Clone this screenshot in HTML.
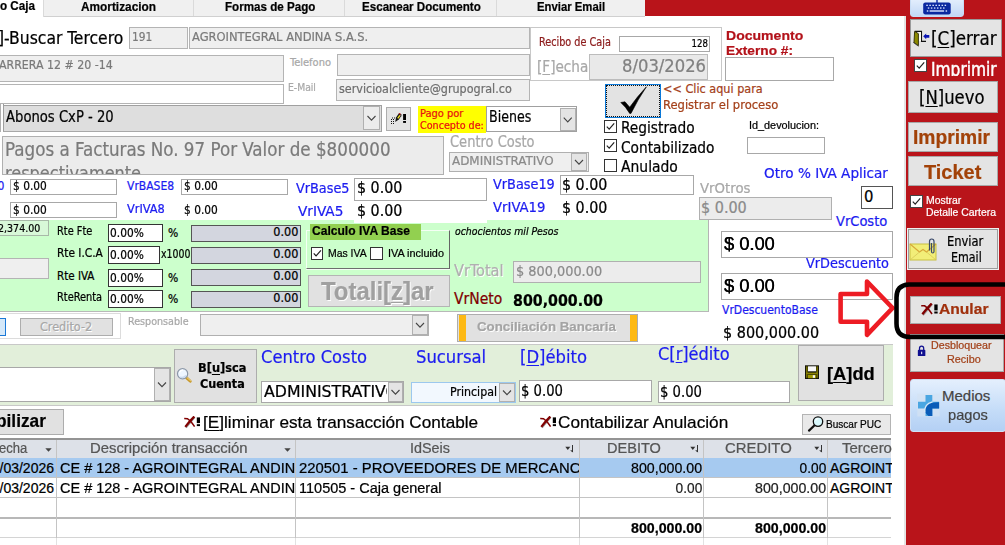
<!DOCTYPE html>
<html lang="es"><head><meta charset="utf-8"><title>Recibo de Caja</title>
<style>html,body{margin:0;padding:0;}body{width:1005px;height:545px;overflow:hidden;position:relative;background:#fff;font-family:"Liberation Sans",sans-serif;}#r{position:absolute;left:0;top:0;width:1005px;height:545px;overflow:hidden;}#r div,#r svg,#r span{position:absolute;}#r div div,#r div span{position:absolute;}.t{white-space:nowrap;line-height:1;transform-origin:0 0;-webkit-text-stroke:0.22px currentColor;}u{text-decoration:underline;text-decoration-thickness:1px;text-underline-offset:1.500px;}</style></head>
<body><div id="r">
<div style="left:0px;top:0px;width:1005px;height:545px;background:#fff;"></div>
<div style="left:645px;top:0px;width:360px;height:16px;background:#b9141a;"></div>
<div style="left:906px;top:0px;width:99px;height:545px;background:#b9141a;"></div>
<div style="left:904px;top:16px;width:2px;height:529px;background:#e4e4e4;"></div>
<div style="left:0px;top:0px;width:645px;height:16.5px;background:#f0f0f0;border-bottom:1px solid #d0d0d0;box-sizing:border-box;"></div>
<div style="left:0px;top:0px;width:44px;height:17px;background:#fff;border-right:1px solid #dadada;box-sizing:border-box;"></div>
<div style="left:193px;top:0px;width:1px;height:16px;background:#dadada;"></div>
<div style="left:344px;top:0px;width:1px;height:16px;background:#dadada;"></div>
<div style="left:496px;top:0px;width:1px;height:16px;background:#dadada;"></div>
<span id="t1" class="t" style="top:0.24px;font-size:12px;color:#000;left:0px;transform:scale(0.9722,1.0);font-weight:bold;">o Caja</span>
<span id="t2" class="t" style="top:0.94px;font-size:12px;color:#000;left:81px;transform:scale(0.9868,1.0);font-weight:bold;">Amortizacion</span>
<span id="t3" class="t" style="top:0.94px;font-size:12px;color:#000;left:225px;transform:scale(0.9677,1.0);font-weight:bold;">Formas de Pago</span>
<span id="t4" class="t" style="top:0.94px;font-size:12px;color:#000;left:362px;transform:scale(0.9675,1.0);font-weight:bold;">Escanear Documento</span>
<span id="t5" class="t" style="top:0.94px;font-size:12px;color:#000;left:537px;transform:scale(0.9444,1.0);font-weight:bold;">Enviar Email</span>
<span id="t6" class="t" style="top:30.45px;font-size:17.5px;color:#000;left:-2.3px;transform:scale(0.9905,1.0);font-family:'DejaVu Sans Condensed','Liberation Sans',sans-serif;">]-Buscar Tercero</span>
<div style="left:129px;top:27px;width:58.5px;height:21.5px;background:#efefef;border:1px solid #b4b4b4;box-sizing:border-box;"></div>
<span id="t7" class="t" style="top:29.98px;font-size:13px;color:#7a7a7a;left:132px;transform:scale(0.9091,1.0);font-family:'DejaVu Sans Condensed','Liberation Sans',sans-serif;">191</span>
<div style="left:189px;top:27px;width:341px;height:21.5px;background:#efefef;border:1px solid #b4b4b4;box-sizing:border-box;"></div>
<span id="t8" class="t" style="top:29.98px;font-size:13px;color:#7a7a7a;left:192px;transform:scale(0.9832,1.0);font-family:'DejaVu Sans Condensed','Liberation Sans',sans-serif;">AGROINTEGRAL ANDINA S.A.S.</span>
<div style="left:530px;top:27px;width:191.5px;height:54px;border:1px solid #c8c8c8;box-sizing:border-box;"></div>
<span id="t9" class="t" style="top:37.25px;font-size:11.5px;color:#8c1a1a;left:539px;transform:scale(0.9351,1.0);font-family:'DejaVu Sans Condensed','Liberation Sans',sans-serif;">Recibo de Caja</span>
<div style="left:619px;top:35.5px;width:91px;height:16.5px;background:#fff;border:1px solid #a8a8a8;box-sizing:border-box;"></div>
<span id="t10" class="t" style="top:38.01px;font-size:11px;color:#000;right:297.5px;transform-origin:100% 0;transform:scale(0.8684,1.0);font-family:'DejaVu Sans Condensed','Liberation Sans',sans-serif;">128</span>
<span id="t11" class="t" style="top:58.53px;font-size:16px;color:#a8a8a8;left:537px;transform:scale(0.9444,1.0);font-family:'DejaVu Sans Condensed','Liberation Sans',sans-serif;">[<u>F</u>]echa</span>
<div style="left:589px;top:53.5px;width:119px;height:26.5px;background:#e9e9e9;border:1px solid #bcbcbc;box-sizing:border-box;"></div>
<span id="t12" class="t" style="top:57.39px;font-size:18px;color:#808080;right:298.70000000000005px;transform-origin:100% 0;transform:scale(1.0120,1.0);font-family:'DejaVu Sans Condensed','Liberation Sans',sans-serif;">8/03/2026</span>
<span id="t13" class="t" style="top:29.53px;font-size:13.5px;color:#b3121a;left:726px;transform:scale(1.0405,0.95);font-weight:bold;">Documento</span>
<span id="t14" class="t" style="top:45.33px;font-size:13.5px;color:#b3121a;left:726px;transform:scale(1.0152,0.95);font-weight:bold;">Externo #:</span>
<div style="left:725px;top:57px;width:109px;height:24px;background:#fff;border:1px solid #a8a8a8;box-sizing:border-box;"></div>
<div style="left:-5px;top:55px;width:288.8px;height:27px;background:#efefef;border:1px solid #b4b4b4;box-sizing:border-box;"></div>
<span id="t15" class="t" style="top:58.48px;font-size:13px;color:#7a7a7a;left:-1px;transform:scale(0.9421,1.0);font-family:'DejaVu Sans Condensed','Liberation Sans',sans-serif;">ARRERA 12 # 20 -14</span>
<div style="left:-5px;top:84px;width:288.8px;height:20px;background:#fff;border:1px solid #b4b4b4;box-sizing:border-box;"></div>
<span id="t16" class="t" style="top:56.71px;font-size:11px;color:#a8a8a8;left:290px;font-family:'DejaVu Sans Condensed','Liberation Sans',sans-serif;">Telefono</span>
<div style="left:337px;top:54px;width:192.5px;height:21.5px;background:#efefef;border:1px solid #b4b4b4;box-sizing:border-box;"></div>
<span id="t17" class="t" style="top:82.21px;font-size:11px;color:#a8a8a8;left:288px;transform:scale(0.9333,1.0);font-family:'DejaVu Sans Condensed','Liberation Sans',sans-serif;">E-Mail</span>
<div style="left:336px;top:79px;width:193.5px;height:21.5px;background:#efefef;border:1px solid #b4b4b4;box-sizing:border-box;"></div>
<span id="t18" class="t" style="top:81.98px;font-size:13px;color:#6e6e6e;left:339px;transform:scale(0.9558,1.0);font-family:'DejaVu Sans Condensed','Liberation Sans',sans-serif;">servicioalcliente@grupogral.co</span>
<div style="left:0px;top:103.5px;width:1px;height:28.5px;background:#b0b0b0;"></div>
<div style="left:2.5px;top:104px;width:1px;height:28px;background:#9a9a9a;"></div>
<div style="left:3px;top:105px;width:378.5px;height:26.5px;background:#dedede;border:1px solid #a0a0a0;box-sizing:border-box;border-bottom:1.500px solid #a8a8a8;"></div>
<span id="t19" class="t" style="top:109.13px;font-size:16px;color:#000;left:6px;transform:scale(0.9153,1.0);font-family:'DejaVu Sans Condensed','Liberation Sans',sans-serif;">Abonos CxP - 20</span>
<div style="left:363px;top:106px;width:17px;height:24px;background:#ececec;box-shadow:inset 0 0 0 1px #b0b0b0;"><svg width="17" height="24" viewBox="0 0 17 24" style="position:absolute;left:0;top:0"><path d="M4.5 10.0 L8.5 14.2 L12.5 10.0" fill="none" stroke="#444" stroke-width="1.1"/></svg></div>
<div style="left:386px;top:107px;width:25px;height:24px;background:#e4e4e4;border:1px solid #adadad;box-sizing:border-box;"></div>
<svg style="left:389px;top:111px" width="20" height="15" viewBox="389 111 20 15"><g fill="#111"><rect x="391" y="119" width="1" height="1"/><rect x="393" y="119" width="1" height="1"/><rect x="391" y="121" width="1" height="1"/><rect x="393" y="121" width="1" height="1"/><rect x="391" y="123" width="1" height="1"/><rect x="393" y="123" width="1" height="1"/><rect x="392" y="117.500" width="1" height="1"/><rect x="394" y="117.500" width="1" height="1"/></g><path d="M395.200 122 L396 117.500 L399.200 113 L402 115 L398.800 119.600 Z" fill="#111"/><path d="M397.200 118 L399.300 115 L400.500 115.800 L398.400 118.800Z" fill="#f0e020"/><path d="M398.600 113.800 L399.500 113 L401 114 L400.300 114.800Z" fill="#d01818"/><path d="M401 114.300 L402.300 115.200 L401.500 116.600 L400.300 115.700Z" fill="#909090"/><rect x="403.100" y="114" width="2.900" height="6" fill="#000"/><rect x="403.100" y="121" width="2.900" height="1.900" fill="#000"/></svg>
<div style="left:418px;top:106px;width:68px;height:27px;background:#ffff00;"></div>
<span id="t20" class="t" style="top:108.21px;font-size:11px;color:#e81010;left:420px;font-family:'DejaVu Sans Condensed','Liberation Sans',sans-serif;">Pago por</span>
<span id="t21" class="t" style="top:120.31px;font-size:11px;color:#e81010;left:420px;transform:scale(0.9697,1.0);font-family:'DejaVu Sans Condensed','Liberation Sans',sans-serif;">Concepto de:</span>
<div style="left:486px;top:106px;width:90.5px;height:26.3px;background:#fff;border:1px solid #a0a0a0;box-sizing:border-box;"></div>
<span id="t22" class="t" style="top:109.13px;font-size:16px;color:#000;left:489px;transform:scale(0.8750,1.0);font-family:'DejaVu Sans Condensed','Liberation Sans',sans-serif;">Bienes</span>
<div style="left:560px;top:108px;width:15.5px;height:23.3px;background:#e4e4e4;box-shadow:inset 0 0 0 1px #b0b0b0;"><svg width="15.5" height="23.3" viewBox="0 0 15.5 23.3" style="position:absolute;left:0;top:0"><path d="M3.75 9.65 L7.75 13.850000000000001 L11.75 9.65" fill="none" stroke="#444" stroke-width="1.1"/></svg></div>
<div style="left:604.8px;top:83.8px;width:56.2px;height:34.2px;background:#e3e3e3;border:1.600px solid #0a78d8;box-sizing:border-box;outline:1px dotted #111;outline-offset:-2.600px;"></div>
<svg style="left:615px;top:84px" width="36" height="32" viewBox="615 84 36 32"><path d="M620.800 102.500 L625 101.800 L629.700 107.200 Q637.600 96.200 646.400 86.800 Q637.800 99.500 631 113.400 L629.700 113.400 Q626 107 620.800 102.500Z" fill="#000" stroke="#000" stroke-width="0.600" stroke-linejoin="round"/></svg>
<span id="t23" class="t" style="top:82.54px;font-size:12.5px;color:#a4401a;left:663px;font-family:'DejaVu Sans Condensed','Liberation Sans',sans-serif;">&lt;&lt; Clic aqui para</span>
<span id="t24" class="t" style="top:98.84px;font-size:12.5px;color:#a4401a;left:663px;transform:scale(1.0268,1.0);font-family:'DejaVu Sans Condensed','Liberation Sans',sans-serif;">Registrar el proceso</span>
<div style="left:604px;top:120px;width:13px;height:13px;background:#fff;box-shadow:inset 0 0 0 1px #333;"><svg width="13" height="13" viewBox="0 0 13 13" style="position:absolute;left:0;top:0"><path d="M2.8 6.6 L5.2 9.2 L10.2 3.4" fill="none" stroke="#222" stroke-width="1.2"/></svg></div>
<span id="t25" class="t" style="top:120.33px;font-size:16px;color:#000;left:620.5px;transform:scale(0.9545,1.0);font-family:'DejaVu Sans Condensed','Liberation Sans',sans-serif;">Registrado</span>
<div style="left:604px;top:139.2px;width:13px;height:13px;background:#fff;box-shadow:inset 0 0 0 1px #333;"><svg width="13" height="13" viewBox="0 0 13 13" style="position:absolute;left:0;top:0"><path d="M2.8 6.6 L5.2 9.2 L10.2 3.4" fill="none" stroke="#222" stroke-width="1.2"/></svg></div>
<span id="t26" class="t" style="top:139.63px;font-size:16px;color:#000;left:620.5px;transform:scale(0.9541,1.0);font-family:'DejaVu Sans Condensed','Liberation Sans',sans-serif;">Contabilizado</span>
<div style="left:604px;top:158.5px;width:13px;height:13px;background:#fff;box-shadow:inset 0 0 0 1px #333;"></div>
<span id="t27" class="t" style="top:158.83px;font-size:16px;color:#000;left:621px;transform:scale(0.9661,1.0);font-family:'DejaVu Sans Condensed','Liberation Sans',sans-serif;">Anulado</span>
<span id="t28" class="t" style="top:119.57px;font-size:11px;color:#000;left:749px;transform:scale(0.9859,1.0);">Id_devolucion:</span>
<div style="left:747px;top:137px;width:78px;height:17px;background:#fff;border:1px solid #a8a8a8;box-sizing:border-box;"></div>
<div style="left:2.3px;top:136px;width:441.4px;height:38.5px;background:#ececec;border:1px solid #b0b0b0;box-sizing:border-box;overflow:hidden;"></div>
<div style="left:4px;top:137px;width:438px;height:36.500px;overflow:hidden;"><span id="pg1" class="t" style="left:0.5px;top:3.08px;font-size:19px;color:#7a7a7a;transform:scaleX(0.9797);font-family:'DejaVu Sans Condensed','Liberation Sans',sans-serif;">Pagos a Facturas No. 97 Por Valor de $800000</span><span id="pg2" class="t" style="left:0.5px;top:27.08px;font-size:19px;color:#7a7a7a;transform:scaleX(0.9444);font-family:'DejaVu Sans Condensed','Liberation Sans',sans-serif;">respectivamente</span></div>
<span id="t29" class="t" style="top:135.25px;font-size:15px;color:#a8a8a8;left:450px;transform:scale(0.9659,1.0);font-family:'DejaVu Sans Condensed','Liberation Sans',sans-serif;">Centro Costo</span>
<div style="left:449px;top:151.5px;width:139.5px;height:20.5px;background:#efefef;border:1px solid #b0b0b0;box-sizing:border-box;"></div>
<span id="t30" class="t" style="top:155.04px;font-size:12.5px;color:#8a8a8a;left:452px;transform:scale(1.0625,1.0);font-family:'DejaVu Sans Condensed','Liberation Sans',sans-serif;">ADMINISTRATIVO</span>
<div style="left:571px;top:153px;width:16px;height:18px;background:#e4e4e4;box-shadow:inset 0 0 0 1px #b0b0b0;"><svg width="16" height="18" viewBox="0 0 16 18" style="position:absolute;left:0;top:0"><path d="M4.0 7.0 L8.0 11.2 L12.0 7.0" fill="none" stroke="#444" stroke-width="1.1"/></svg></div>
<span id="t31" class="t" style="top:180.10px;font-size:12px;color:#1c1cf0;left:-2.6px;font-family:'DejaVu Sans Condensed','Liberation Sans',sans-serif;">0</span>
<div style="left:10px;top:178.5px;width:107px;height:16.5px;background:#fff;border:1px solid #a8a8a8;box-sizing:border-box;"></div>
<span id="t32" class="t" style="top:180.04px;font-size:12.5px;color:#000;left:13px;transform:scale(0.9444,1.0);font-family:'DejaVu Sans Condensed','Liberation Sans',sans-serif;">$ 0.00</span>
<span id="t33" class="t" style="top:179.60px;font-size:12px;color:#1c1cf0;left:127px;font-family:'DejaVu Sans Condensed','Liberation Sans',sans-serif;">VrBASE8</span>
<div style="left:181px;top:178.5px;width:107px;height:16.5px;background:#fff;border:1px solid #a8a8a8;box-sizing:border-box;"></div>
<span id="t34" class="t" style="top:180.04px;font-size:12.5px;color:#000;left:184px;transform:scale(0.9444,1.0);font-family:'DejaVu Sans Condensed','Liberation Sans',sans-serif;">$ 0.00</span>
<div style="left:10px;top:201.5px;width:107px;height:16.5px;background:#fff;border:1px solid #a8a8a8;box-sizing:border-box;"></div>
<span id="t35" class="t" style="top:203.54px;font-size:12.5px;color:#000;left:13px;transform:scale(0.9444,1.0);font-family:'DejaVu Sans Condensed','Liberation Sans',sans-serif;">$ 0.00</span>
<span id="t36" class="t" style="top:202.60px;font-size:12px;color:#1c1cf0;left:127px;transform:scale(1.0556,1.0);font-family:'DejaVu Sans Condensed','Liberation Sans',sans-serif;">VrIVA8</span>
<span id="t37" class="t" style="top:203.54px;font-size:12.5px;color:#000;left:184px;transform:scale(0.9444,1.0);font-family:'DejaVu Sans Condensed','Liberation Sans',sans-serif;">$ 0.00</span>
<span id="t38" class="t" style="top:181.16px;font-size:14px;color:#1c1cf0;left:295.5px;transform:scale(1.0192,1.0);font-family:'DejaVu Sans Condensed','Liberation Sans',sans-serif;">VrBase5</span>
<span id="t39" class="t" style="top:204.00px;font-size:14.5px;color:#1c1cf0;left:298.3px;transform:scale(1.0465,1.0);font-family:'DejaVu Sans Condensed','Liberation Sans',sans-serif;">VrIVA5</span>
<span id="t40" class="t" style="top:177.36px;font-size:14px;color:#1c1cf0;left:493.3px;transform:scale(1.0217,1.0);font-family:'DejaVu Sans Condensed','Liberation Sans',sans-serif;">VrBase19</span>
<span id="t41" class="t" style="top:200.36px;font-size:14px;color:#1c1cf0;left:492.7px;transform:scale(1.0500,1.0);font-family:'DejaVu Sans Condensed','Liberation Sans',sans-serif;">VrIVA19</span>
<div style="left:0px;top:220px;width:708px;height:90.5px;background:#ccffcc;border-bottom:1px solid #b8b8b8;border-right:1px solid #b4b4b4;"></div>
<div style="left:354px;top:200px;width:133px;height:23px;background:#fff;"></div>
<div style="left:354px;top:178px;width:133px;height:23px;background:#fff;border:1px solid #a8a8a8;box-sizing:border-box;"></div>
<span id="t42" class="t" style="top:181.19px;font-size:15.5px;color:#000;left:356.5px;transform:scale(1.0227,1.0);font-family:'DejaVu Sans Condensed','Liberation Sans',sans-serif;">$ 0.00</span>
<span id="t43" class="t" style="top:204.39px;font-size:15.5px;color:#000;left:356.5px;transform:scale(1.0227,1.0);font-family:'DejaVu Sans Condensed','Liberation Sans',sans-serif;">$ 0.00</span>
<div style="left:560px;top:175px;width:134px;height:20px;background:#fff;border:1px solid #a8a8a8;box-sizing:border-box;"></div>
<span id="t44" class="t" style="top:178.05px;font-size:15px;color:#000;left:562px;transform:scale(1.0581,1.0);font-family:'DejaVu Sans Condensed','Liberation Sans',sans-serif;">$ 0.00</span>
<span id="t45" class="t" style="top:201.05px;font-size:15px;color:#000;left:562px;transform:scale(1.0581,1.0);font-family:'DejaVu Sans Condensed','Liberation Sans',sans-serif;">$ 0.00</span>
<span id="t46" class="t" style="top:180.80px;font-size:14.5px;color:#a8a8a8;left:700px;transform:scale(1.0204,1.0);font-family:'DejaVu Sans Condensed','Liberation Sans',sans-serif;">VrOtros</span>
<div style="left:699px;top:197px;width:133px;height:22.7px;background:#ececec;border:1px solid #b0b0b0;box-sizing:border-box;"></div>
<span id="t47" class="t" style="top:200.13px;font-size:16px;color:#8a8a8a;left:701px;font-family:'DejaVu Sans Condensed','Liberation Sans',sans-serif;">$ 0.00</span>
<span id="t48" class="t" style="top:165.80px;font-size:14.5px;color:#1c1cf0;left:764px;transform:scale(1.0420,1.0);font-family:'DejaVu Sans Condensed','Liberation Sans',sans-serif;">Otro % IVA Aplicar</span>
<div style="left:861px;top:186px;width:32px;height:23px;background:#fff;border:1px solid #555;box-sizing:border-box;"></div>
<span id="t49" class="t" style="top:189.07px;font-size:16.5px;color:#000;left:864px;font-family:'DejaVu Sans Condensed','Liberation Sans',sans-serif;">0</span>
<span id="t50" class="t" style="top:213.80px;font-size:14.5px;color:#1c1cf0;left:836px;font-family:'DejaVu Sans Condensed','Liberation Sans',sans-serif;">VrCosto</span>
<div style="left:721px;top:231px;width:172px;height:27px;background:#fff;border:1px solid #a8a8a8;box-sizing:border-box;"></div>
<span id="t51" class="t" style="top:235.72px;font-size:17.5px;color:#000;left:724px;transform:scale(1.0408,1.0);text-shadow:0.3px 0 0 #000;">$ 0.00</span>
<span id="t52" class="t" style="top:256.30px;font-size:14.5px;color:#1c1cf0;left:806px;transform:scale(0.9881,1.0);font-family:'DejaVu Sans Condensed','Liberation Sans',sans-serif;">VrDescuento</span>
<div style="left:721px;top:273px;width:172px;height:27px;background:#fff;border:1px solid #a8a8a8;box-sizing:border-box;"></div>
<span id="t53" class="t" style="top:277.73px;font-size:17.5px;color:#000;left:724px;transform:scale(1.0408,1.0);text-shadow:0.3px 0 0 #000;">$ 0.00</span>
<span id="t54" class="t" style="top:304.20px;font-size:12px;color:#1c1cf0;left:722px;font-family:'DejaVu Sans Condensed','Liberation Sans',sans-serif;">VrDescuentoBase</span>
<span id="t55" class="t" style="top:325.69px;font-size:15.5px;color:#000;left:723px;transform:scale(1.0323,1.0);font-family:'DejaVu Sans Condensed','Liberation Sans',sans-serif;">$ 800,000.00</span>
<div style="left:-1px;top:220px;width:50px;height:16px;background:#d8f8d8;border:1px solid #a8b8a8;box-sizing:border-box;"></div>
<span id="t56" class="t" style="top:222.98px;font-size:11.3px;color:#000;right:964.7px;transform-origin:100% 0;transform:scale(0.9333,1.0);font-family:'DejaVu Sans Condensed','Liberation Sans',sans-serif;">2,374.00</span>
<div style="left:-1px;top:258px;width:50px;height:21px;background:#efefef;border:1px solid #b4b4b4;box-sizing:border-box;"></div>
<span id="t57" class="t" style="top:225.65px;font-size:11.5px;color:#000;left:57px;transform:scale(0.9459,1.0);font-family:'DejaVu Sans Condensed','Liberation Sans',sans-serif;">Rte Fte</span>
<div style="left:108px;top:223.8px;width:55px;height:18px;background:#fff;border:1px solid #333;box-sizing:border-box;"></div>
<span id="t58" class="t" style="top:227.04px;font-size:12.5px;color:#000;left:110px;transform:scale(0.9444,1.0);font-family:'DejaVu Sans Condensed','Liberation Sans',sans-serif;">0.00%</span>
<span id="t59" class="t" style="top:226.60px;font-size:12px;color:#000;left:168px;font-family:'DejaVu Sans Condensed','Liberation Sans',sans-serif;">%</span>
<div style="left:191px;top:225px;width:110px;height:17px;background:#d3d6df;border:1px solid #555;box-sizing:border-box;"></div>
<span id="t60" class="t" style="top:226.34px;font-size:12.5px;color:#000;right:706.7px;transform-origin:100% 0;font-family:'DejaVu Sans Condensed','Liberation Sans',sans-serif;">0.00</span>
<span id="t61" class="t" style="top:247.65px;font-size:11.5px;color:#000;left:57px;transform:scale(1.0222,1.0);font-family:'DejaVu Sans Condensed','Liberation Sans',sans-serif;">Rte I.C.A</span>
<div style="left:108px;top:245.8px;width:52px;height:18px;background:#fff;border:1px solid #333;box-sizing:border-box;"></div>
<span id="t62" class="t" style="top:249.04px;font-size:12.5px;color:#000;left:110px;transform:scale(0.9444,1.0);font-family:'DejaVu Sans Condensed','Liberation Sans',sans-serif;">0.00%</span>
<span id="t63" class="t" style="top:249.15px;font-size:11.5px;color:#000;left:161px;transform:scale(0.9062,1.0);font-family:'DejaVu Sans Condensed','Liberation Sans',sans-serif;">x1000</span>
<div style="left:191px;top:247px;width:110px;height:17px;background:#d3d6df;border:1px solid #555;box-sizing:border-box;"></div>
<span id="t64" class="t" style="top:248.34px;font-size:12.5px;color:#000;right:706.7px;transform-origin:100% 0;font-family:'DejaVu Sans Condensed','Liberation Sans',sans-serif;">0.00</span>
<span id="t65" class="t" style="top:270.65px;font-size:11.5px;color:#000;left:57px;font-family:'DejaVu Sans Condensed','Liberation Sans',sans-serif;">Rte IVA</span>
<div style="left:108px;top:268.8px;width:55px;height:18px;background:#fff;border:1px solid #333;box-sizing:border-box;"></div>
<span id="t66" class="t" style="top:272.04px;font-size:12.5px;color:#000;left:110px;transform:scale(0.9444,1.0);font-family:'DejaVu Sans Condensed','Liberation Sans',sans-serif;">0.00%</span>
<span id="t67" class="t" style="top:271.60px;font-size:12px;color:#000;left:168px;font-family:'DejaVu Sans Condensed','Liberation Sans',sans-serif;">%</span>
<div style="left:191px;top:269px;width:110px;height:17px;background:#d3d6df;border:1px solid #555;box-sizing:border-box;"></div>
<span id="t68" class="t" style="top:270.34px;font-size:12.5px;color:#000;right:706.7px;transform-origin:100% 0;font-family:'DejaVu Sans Condensed','Liberation Sans',sans-serif;">0.00</span>
<span id="t69" class="t" style="top:291.65px;font-size:11.5px;color:#000;left:57px;transform:scale(0.9479,1.0);font-family:'DejaVu Sans Condensed','Liberation Sans',sans-serif;">RteRenta</span>
<div style="left:108px;top:289.8px;width:55px;height:18px;background:#fff;border:1px solid #333;box-sizing:border-box;"></div>
<span id="t70" class="t" style="top:293.04px;font-size:12.5px;color:#000;left:110px;transform:scale(0.9444,1.0);font-family:'DejaVu Sans Condensed','Liberation Sans',sans-serif;">0.00%</span>
<span id="t71" class="t" style="top:292.60px;font-size:12px;color:#000;left:168px;font-family:'DejaVu Sans Condensed','Liberation Sans',sans-serif;">%</span>
<div style="left:191px;top:291px;width:110px;height:17px;background:#d3d6df;border:1px solid #555;box-sizing:border-box;"></div>
<span id="t72" class="t" style="top:292.34px;font-size:12.5px;color:#000;right:706.7px;transform-origin:100% 0;font-family:'DejaVu Sans Condensed','Liberation Sans',sans-serif;">0.00</span>
<div style="left:306px;top:230px;width:144px;height:38.8px;box-sizing:border-box;border-top:1px solid #f4fff4;border-left:1px solid #f4fff4;border-right:1.500px solid #646464;border-bottom:1.500px solid #6e6e6e;box-shadow:0 1px 0 #f4fff4;"></div>
<div style="left:310px;top:224px;width:111px;height:16px;background:#92d050;"></div>
<span id="t73" class="t" style="top:225.38px;font-size:12.5px;color:#000;left:312.2px;transform:scale(0.9653,1.0);font-weight:bold;">Calculo IVA Base</span>
<div style="left:310.6px;top:247.3px;width:12.7px;height:12.7px;background:#fff;box-shadow:inset 0 0 0 1px #333;"><svg width="12.7" height="12.7" viewBox="0 0 13 13" style="position:absolute;left:0;top:0"><path d="M2.8 6.6 L5.2 9.2 L10.2 3.4" fill="none" stroke="#222" stroke-width="1.2"/></svg></div>
<span id="t74" class="t" style="top:247.50px;font-size:11.5px;color:#000;left:328px;transform:scale(0.9070,1.0);">Mas IVA</span>
<div style="left:370.4px;top:247.3px;width:12.7px;height:12.7px;background:#fff;box-shadow:inset 0 0 0 1px #333;"></div>
<span id="t75" class="t" style="top:247.50px;font-size:11.5px;color:#000;left:388px;transform:scale(0.9441,1.0);">IVA incluido</span>
<div style="left:307.5px;top:274.5px;width:142.5px;height:32px;background:#e1e1e1;border:1px solid #b4b4b4;box-sizing:border-box;"></div>
<span id="t76" class="t" style="top:279.45px;font-size:25px;color:#a0a0a0;left:321px;transform:scale(0.9576,1.0);font-weight:bold;text-shadow:1px 1px 0 #fff;">Totali[<u>z</u>]ar</span>
<span id="t77" class="t" style="top:226.27px;font-size:10.5px;color:#000;left:455px;transform:scale(0.9904,1.0);font-style:italic;font-family:'DejaVu Sans Condensed','Liberation Sans',sans-serif;">ochocientos mil Pesos</span>
<span id="t78" class="t" style="top:263.99px;font-size:15.5px;color:#b0b0b0;left:454px;transform:scale(1.0417,1.0);font-family:'DejaVu Sans Condensed','Liberation Sans',sans-serif;text-shadow:1px 1px 0 #fff;">VrTotal</span>
<div style="left:513px;top:261px;width:188px;height:21.5px;background:#ececec;border:1px solid #b0b0b0;box-sizing:border-box;"></div>
<span id="t79" class="t" style="top:264.36px;font-size:14px;color:#8a8a8a;left:516px;transform:scale(1.0238,1.0);font-family:'DejaVu Sans Condensed','Liberation Sans',sans-serif;">$ 800,000.00</span>
<span id="t80" class="t" style="top:291.99px;font-size:15.5px;color:#800000;left:454px;font-family:'DejaVu Sans Condensed','Liberation Sans',sans-serif;">VrNeto</span>
<span id="t81" class="t" style="top:292.57px;font-size:16.5px;color:#000;left:513px;transform:scale(0.9574,1.0);font-weight:bold;font-family:'DejaVu Sans Condensed','Liberation Sans',sans-serif;">800,000.00</span>
<div style="left:-1px;top:313px;width:122px;height:26px;background:#fff;border:1px solid #dcdcdc;box-sizing:border-box;"></div>
<div style="left:-3px;top:317.5px;width:8.5px;height:18.5px;background:#d4e8f9;border:1.500px solid #1a78d6;box-sizing:border-box;"></div>
<div style="left:20px;top:318px;width:93px;height:18px;background:#e1e1e1;border:1px solid #adadad;box-sizing:border-box;"></div>
<span id="t82" class="t" style="top:321.34px;font-size:12.5px;color:#a8a8a8;left:40px;font-family:'DejaVu Sans Condensed','Liberation Sans',sans-serif;text-shadow:1px 1px 0 #fff;">Credito-2</span>
<span id="t83" class="t" style="top:316.01px;font-size:11px;color:#a8a8a8;left:128px;transform:scale(0.9683,1.0);font-family:'DejaVu Sans Condensed','Liberation Sans',sans-serif;">Responsable</span>
<div style="left:200px;top:314px;width:229px;height:22px;background:#efefef;border:1px solid #b0b0b0;box-sizing:border-box;"></div>
<div style="left:412px;top:315px;width:16px;height:20px;background:#e4e4e4;box-shadow:inset 0 0 0 1px #b0b0b0;"><svg width="16" height="20" viewBox="0 0 16 20" style="position:absolute;left:0;top:0"><path d="M4.0 8.0 L8.0 12.2 L12.0 8.0" fill="none" stroke="#444" stroke-width="1.1"/></svg></div>
<div style="left:457px;top:314px;width:181px;height:27.7px;background:#e1e1e1;border:1px solid #adadad;box-sizing:border-box;"></div>
<div style="left:459px;top:315px;width:7px;height:25.7px;background:#fdb913;"></div>
<div style="left:630px;top:315px;width:7px;height:25.7px;background:#fdb913;"></div>
<span id="t84" class="t" style="top:320.31px;font-size:13px;color:#a4a4a4;left:477px;transform:scale(1.0221,1.0);font-weight:bold;text-shadow:1px 1px 0 #fff;">Conciliación Bancaria</span>
<div style="left:0px;top:344px;width:893px;height:62px;background:#e2efda;border-top:1px solid #c8c8c8;border-bottom:1px solid #c8c8c8;box-sizing:border-box;"></div>
<div style="left:-2px;top:367px;width:173px;height:35px;background:#fff;border:1px solid #a8a8a8;box-sizing:border-box;"></div>
<div style="left:154px;top:368px;width:16px;height:33px;background:#e4e4e4;box-shadow:inset 0 0 0 1px #b0b0b0;"><svg width="16" height="33" viewBox="0 0 16 33" style="position:absolute;left:0;top:0"><path d="M4.0 14.5 L8.0 18.7 L12.0 14.5" fill="none" stroke="#444" stroke-width="1.1"/></svg></div>
<div style="left:174px;top:349px;width:83px;height:53.6px;background:#e1e1e1;border:1px solid #adadad;box-sizing:border-box;"></div>
<svg style="left:175px;top:366px" width="19" height="19" viewBox="175 366 19 19"><path d="M186.300 377.600 L190.300 381.300" stroke="#c89828" stroke-width="2.800" stroke-linecap="round"/><path d="M186.800 377.400 L190.600 380.800" stroke="#f0d888" stroke-width="1" stroke-linecap="round"/><circle cx="182.600" cy="373.800" r="5.100" fill="#eef6ff" stroke="#8c98a8" stroke-width="1.200"/><path d="M179.500 372.500 Q180.500 370 183 369.800" stroke="#fff" stroke-width="1.300" fill="none"/><path d="M180 377 Q183.500 378.500 186 375.500" stroke="#c8d8ee" stroke-width="1.300" fill="none"/></svg>
<span id="t85" class="t" style="top:362.55px;font-size:11.5px;color:#000;left:197.5px;transform:scale(1.1000,1.0);font-weight:bold;font-family:'DejaVu Sans Condensed','Liberation Sans',sans-serif;">B[<u>u</u>]sca</span>
<span id="t86" class="t" style="top:378.65px;font-size:11.5px;color:#000;left:199.5px;transform:scale(1.0829,1.0);font-weight:bold;font-family:'DejaVu Sans Condensed','Liberation Sans',sans-serif;">Cuenta</span>
<span id="t87" class="t" style="top:347.64px;font-size:18.5px;color:#1c1cf0;left:261px;transform:scale(0.9815,1.0);font-family:'DejaVu Sans Condensed','Liberation Sans',sans-serif;">Centro Costo</span>
<div style="left:261px;top:381px;width:143px;height:22px;background:#fff;border:1px solid #a8a8a8;box-sizing:border-box;"></div>
<div style="left:262px;top:382px;width:124.500px;height:20px;overflow:hidden"><span id="adm" class="t" style="left:1.7px;top:2.43px;font-size:16px;color:#000;transform:scaleX(1.0943);font-family:'DejaVu Sans Condensed','Liberation Sans',sans-serif;">ADMINISTRATIVO</span></div>
<div style="left:388px;top:382px;width:15px;height:20px;background:#e4e4e4;box-shadow:inset 0 0 0 1px #b0b0b0;"><svg width="15" height="20" viewBox="0 0 15 20" style="position:absolute;left:0;top:0"><path d="M3.5 8.0 L7.5 12.2 L11.5 8.0" fill="none" stroke="#444" stroke-width="1.1"/></svg></div>
<span id="t88" class="t" style="top:347.64px;font-size:18.5px;color:#1c1cf0;left:416px;transform:scale(0.9859,1.0);font-family:'DejaVu Sans Condensed','Liberation Sans',sans-serif;">Sucursal</span>
<div style="left:411px;top:382px;width:105px;height:21px;background:#f2f8fe;border:1px solid #9cc8ee;box-sizing:border-box;"></div>
<span id="t89" class="t" style="top:385.60px;font-size:12px;color:#000;right:508px;transform-origin:100% 0;transform:scale(1.0217,1.0);font-family:'DejaVu Sans Condensed','Liberation Sans',sans-serif;">Principal</span>
<div style="left:499px;top:383px;width:16px;height:19px;background:#e4e4e4;box-shadow:inset 0 0 0 1px #b0b0b0;"><svg width="16" height="19" viewBox="0 0 16 19" style="position:absolute;left:0;top:0"><path d="M4.0 7.5 L8.0 11.7 L12.0 7.5" fill="none" stroke="#444" stroke-width="1.1"/></svg></div>
<span id="t90" class="t" style="top:347.64px;font-size:18.5px;color:#1c1cf0;left:520px;transform:scale(0.9853,1.0);font-family:'DejaVu Sans Condensed','Liberation Sans',sans-serif;">[<u>D</u>]ébito</span>
<div style="left:519px;top:380px;width:133px;height:22px;background:#fff;border:1px solid #a8a8a8;box-sizing:border-box;"></div>
<span id="t91" class="t" style="top:384.44px;font-size:15px;color:#000;left:521px;transform:scale(0.9767,1.0);font-family:'DejaVu Sans Condensed','Liberation Sans',sans-serif;">$ 0.00</span>
<span id="t92" class="t" style="top:344.64px;font-size:18.5px;color:#1c1cf0;left:658px;transform:scale(0.9730,1.0);font-family:'DejaVu Sans Condensed','Liberation Sans',sans-serif;">C[<u>r</u>]édito</span>
<div style="left:658px;top:381px;width:132px;height:22px;background:#fff;border:1px solid #a8a8a8;box-sizing:border-box;"></div>
<span id="t93" class="t" style="top:385.05px;font-size:15px;color:#000;left:660px;transform:scale(0.9767,1.0);font-family:'DejaVu Sans Condensed','Liberation Sans',sans-serif;">$ 0.00</span>
<div style="left:798px;top:345px;width:86px;height:56px;background:#e1e1e1;border:1px solid #adadad;box-sizing:border-box;"></div>
<svg style="left:805px;top:365px" width="14" height="14" viewBox="0 0 14 14"><rect x="0" y="0.300" width="14" height="13.700" fill="#14140a"/><rect x="1.200" y="1.400" width="1.300" height="11.400" fill="#8c8400"/><rect x="11.500" y="1.400" width="1.300" height="11.400" fill="#8c8400"/><rect x="3" y="1.300" width="8" height="5" fill="#f8f8f8"/><rect x="1.200" y="7.600" width="11.600" height="1.400" fill="#8c8400"/><rect x="3" y="9.600" width="8" height="3.600" fill="#a09800"/><rect x="7.800" y="10.200" width="2.200" height="2.600" fill="#f8f8f8"/></svg>
<span id="t94" class="t" style="top:364.86px;font-size:18px;color:#000;left:827px;transform:scale(1.0170,1.0);font-weight:bold;">[<u>A</u>]dd</span>
<div style="left:-2px;top:409px;width:66px;height:26px;background:#e1e1e1;border:1px solid #adadad;box-sizing:border-box;"></div>
<span id="t95" class="t" style="top:411.90px;font-size:18.5px;color:#000;left:-3.7px;transform:scale(0.9340,1.0);font-weight:bold;">bilizar</span>
<svg style="left:184px;top:415.8px" width="17.0" height="13.0" viewBox="0 0 17 13"><path d="M2 11.800 L10.800 1.200" stroke="#9a9a9a" stroke-width="1.600" fill="none"/><path d="M1.300 10.900 L5.600 5.600 L10.300 0.500" stroke="#800000" stroke-width="2.300" fill="none"/><path d="M0.200 2.600 L3.500 2.700 L6 4.700 L8.200 7.200 L10.600 10.600" stroke="#800000" stroke-width="1.500" fill="none"/><rect x="12.800" y="1.400" width="3.200" height="5.700" fill="#000"/><rect x="12.800" y="8.200" width="3.200" height="1.900" fill="#000"/></svg>
<span id="t96" class="t" style="top:414.29px;font-size:17px;color:#000;left:203px;transform:scale(1.0110,1.0);">[<u>E</u>]liminar esta transacción Contable</span>
<svg style="left:540px;top:415.8px" width="17.0" height="13.0" viewBox="0 0 17 13"><path d="M2 11.800 L10.800 1.200" stroke="#9a9a9a" stroke-width="1.600" fill="none"/><path d="M1.300 10.900 L5.600 5.600 L10.300 0.500" stroke="#800000" stroke-width="2.300" fill="none"/><path d="M0.200 2.600 L3.500 2.700 L6 4.700 L8.200 7.200 L10.600 10.600" stroke="#800000" stroke-width="1.500" fill="none"/><rect x="12.800" y="1.400" width="3.200" height="5.700" fill="#000"/><rect x="12.800" y="8.200" width="3.200" height="1.900" fill="#000"/></svg>
<span id="t97" class="t" style="top:414.29px;font-size:17px;color:#000;left:558px;transform:scale(1.0119,1.0);">Contabilizar Anulación</span>
<div style="left:802px;top:414px;width:89px;height:21px;background:#e9e9e9;border:1px solid #b4b4b4;box-sizing:border-box;"></div>
<svg style="left:806px;top:415px" width="20" height="19" viewBox="806 415 20 19"><path d="M814.600 425.300 L809 430.600" stroke="#111" stroke-width="2.200" stroke-linecap="round"/><circle cx="818" cy="421.600" r="4.700" fill="#d8f8fc" stroke="#111" stroke-width="1.300"/><path d="M815.500 420.500 Q816.500 418.500 818.500 418.500" stroke="#fff" stroke-width="1.200" fill="none"/></svg>
<span id="t98" class="t" style="top:418.91px;font-size:10.7px;color:#000;left:825.8px;transform:scale(0.9390,1.0);">Buscar PUC</span>
<div style="left:0px;top:437.5px;width:891px;height:20.5px;background:#dde1e8;border-top:2px solid #949494;box-sizing:border-box;"></div>
<div style="left:0px;top:458px;width:891px;height:19.5px;background:#a6caf0;"></div>
<div style="left:0px;top:477px;width:891px;height:1px;background:#c4c4c4;"></div>
<div style="left:0px;top:497px;width:891px;height:1px;background:#c4c4c4;"></div>
<div style="left:0px;top:517px;width:891px;height:2px;background:#b8b8b8;"></div>
<div style="left:0px;top:537px;width:891px;height:1px;background:#d4d4d4;"></div>
<div style="left:56px;top:440px;width:1px;height:98px;background:#c4c4c4;"></div>
<div style="left:56px;top:538px;width:1px;height:7px;background:#e2e2e2;"></div>
<div style="left:295px;top:440px;width:1px;height:98px;background:#c4c4c4;"></div>
<div style="left:295px;top:538px;width:1px;height:7px;background:#e2e2e2;"></div>
<div style="left:579px;top:440px;width:1px;height:98px;background:#c4c4c4;"></div>
<div style="left:579px;top:538px;width:1px;height:7px;background:#e2e2e2;"></div>
<div style="left:703.3px;top:440px;width:1px;height:98px;background:#c4c4c4;"></div>
<div style="left:703.3px;top:538px;width:1px;height:7px;background:#e2e2e2;"></div>
<div style="left:827.2px;top:440px;width:1px;height:98px;background:#c4c4c4;"></div>
<div style="left:827.2px;top:538px;width:1px;height:7px;background:#e2e2e2;"></div>
<span id="t99" class="t" style="top:441.18px;font-size:14px;color:#555;left:-1px;transform:scale(0.9333,1.0);">echa</span>
<svg style="left:44.5px;top:447.8px" width="7" height="4" viewBox="0 0 7 4"><path d="M0.300 0.300 L6.700 0.300 L3.500 3.800Z" fill="#444"/></svg>
<span id="t100" class="t" style="top:441.18px;font-size:14px;color:#555;left:90px;transform:scale(1.0604,1.0);">Descripción transacción</span>
<svg style="left:283.5px;top:447.8px" width="7" height="4" viewBox="0 0 7 4"><path d="M0.300 0.300 L6.700 0.300 L3.500 3.800Z" fill="#444"/></svg>
<span id="t101" class="t" style="top:441.18px;font-size:14px;color:#555;left:410px;transform:scale(1.0256,1.0);">IdSeis</span>
<svg style="left:565px;top:445px" width="10" height="8" viewBox="0 0 10 8"><path d="M0.3 1.8 L5.3 1.8 L2.8 5Z" fill="#333"/><path d="M7.5 0 L7.5 7 M5.8 5 L7.5 7.2" stroke="#333" stroke-width="1" fill="none"/></svg>
<span id="t102" class="t" style="top:441.18px;font-size:14px;color:#555;left:607px;transform:scale(1.0385,1.0);">DEBITO</span>
<svg style="left:690px;top:445px" width="10" height="8" viewBox="0 0 10 8"><path d="M0.3 1.8 L5.3 1.8 L2.8 5Z" fill="#333"/><path d="M7.5 0 L7.5 7 M5.8 5 L7.5 7.2" stroke="#333" stroke-width="1" fill="none"/></svg>
<span id="t103" class="t" style="top:441.18px;font-size:14px;color:#555;left:725px;transform:scale(1.0635,1.0);">CREDITO</span>
<svg style="left:814px;top:445px" width="10" height="8" viewBox="0 0 10 8"><path d="M0.3 1.8 L5.3 1.8 L2.8 5Z" fill="#333"/><path d="M7.5 0 L7.5 7 M5.8 5 L7.5 7.2" stroke="#333" stroke-width="1" fill="none"/></svg>
<div style="left:829px;top:438px;width:63px;height:100px;overflow:hidden"><span class="t" style="left:13px;top:3.2px;font-size:14px;color:#555;transform:scaleX(1.07)">Tercero</span><span class="t" style="left:1px;top:23.2px;font-size:14px;color:#000">AGROINTEGRAL</span><span class="t" style="left:1px;top:43.2px;font-size:14px;color:#000">AGROINTEGRAL</span></div>
<span id="t104" class="t" style="top:461.18px;font-size:14px;color:#000;right:951px;transform-origin:100% 0;">/03/2026</span>
<span id="t105" class="t" style="top:481.18px;font-size:14px;color:#000;right:951px;transform-origin:100% 0;">/03/2026</span>
<div style="left:57px;top:458px;width:238px;height:19px;overflow:hidden"><span id="r1a" class="t" style="left:3px;top:3.18px;font-size:14px;color:#000;transform:scaleX(1.0338);">CE # 128 - AGROINTEGRAL ANDINA</span></div>
<div style="left:57px;top:478px;width:238px;height:19px;overflow:hidden"><span id="r2a" class="t" style="left:3px;top:3.18px;font-size:14px;color:#000;transform:scaleX(1.0338);">CE # 128 - AGROINTEGRAL ANDINA</span></div>
<div style="left:296px;top:458px;width:283px;height:19px;overflow:hidden"><span id="r1b" class="t" style="left:3px;top:3.18px;font-size:14px;color:#000;transform:scaleX(1.0609);">220501 - PROVEEDORES DE MERCANCIA</span></div>
<span id="t106" class="t" style="top:481.18px;font-size:14px;color:#000;left:299px;transform:scale(1.0362,1.0);">110505 - Caja general</span>
<span id="t107" class="t" style="top:461.18px;font-size:14px;color:#000;right:303px;transform-origin:100% 0;transform:scale(1.0143,1.0);">800,000.00</span>
<span id="t108" class="t" style="top:481.18px;font-size:14px;color:#222;right:303px;transform-origin:100% 0;transform:scale(0.9778,1.0);">0.00</span>
<span id="t109" class="t" style="top:461.18px;font-size:14px;color:#000;right:179px;transform-origin:100% 0;transform:scale(0.9778,1.0);">0.00</span>
<span id="t110" class="t" style="top:481.18px;font-size:14px;color:#222;right:179px;transform-origin:100% 0;transform:scale(1.0143,1.0);">800,000.00</span>
<span id="t111" class="t" style="top:521.18px;font-size:14px;color:#000;right:303px;transform-origin:100% 0;transform:scale(1.0143,1.0);font-weight:bold;">800,000.00</span>
<span id="t112" class="t" style="top:521.18px;font-size:14px;color:#000;right:179px;transform-origin:100% 0;transform:scale(1.0143,1.0);font-weight:bold;">800,000.00</span>
<svg style="left:830px;top:270px" width="75" height="76" viewBox="830 270 75 76"><path d="M840.6 294 L867 294 L867 281.5 L892.6 308 L867 334.8 L867 321.7 L840.6 321.7 Z" fill="none" stroke="#ed1c24" stroke-width="4.6" stroke-linejoin="round"/></svg>
<div style="left:910px;top:-3px;width:54px;height:19.8px;background:linear-gradient(#e6f0fd,#c2d8f6);border:1px solid #c8dcf4;box-sizing:border-box;border-radius:3px;"></div>
<svg style="left:922px;top:0px" width="30" height="16" viewBox="922 0 30 16"><path d="M937 0 L937 3" stroke="#0a28a0" stroke-width="1.400"/><rect x="923.200" y="2.400" width="27.500" height="12.100" rx="2.200" fill="#0a28a0"/><g fill="#dce6ff"><rect x="926.30" y="4.700" width="1.500" height="1.300"/><rect x="929.35" y="4.700" width="1.500" height="1.300"/><rect x="932.40" y="4.700" width="1.500" height="1.300"/><rect x="935.45" y="4.700" width="1.500" height="1.300"/><rect x="938.50" y="4.700" width="1.500" height="1.300"/><rect x="941.55" y="4.700" width="1.500" height="1.300"/><rect x="944.60" y="4.700" width="1.500" height="1.300"/><rect x="927.80" y="7.400" width="1.500" height="1.300"/><rect x="930.85" y="7.400" width="1.500" height="1.300"/><rect x="933.90" y="7.400" width="1.500" height="1.300"/><rect x="936.95" y="7.400" width="1.500" height="1.300"/><rect x="940.00" y="7.400" width="1.500" height="1.300"/><rect x="943.05" y="7.400" width="1.500" height="1.300"/><rect x="926.800" y="10.300" width="1.500" height="1.400"/><rect x="929.600" y="10.300" width="14.500" height="1.400"/><rect x="945.600" y="10.300" width="1.500" height="1.400"/></g></svg>
<div style="left:910px;top:19.3px;width:91.5px;height:37.7px;background:#e4e4e4;border:1px solid #9a9a9a;box-sizing:border-box;"></div>
<svg style="left:912px;top:29px" width="19" height="19" viewBox="912 29 19 19"><path d="M914.900 31.400 L921.500 31.400 L921.500 41.400 L926 41.400" fill="none" stroke="#111" stroke-width="1.100"/><rect x="918.600" y="32" width="2.400" height="9" fill="#fafaf0"/><path d="M914.600 31.400 L918.400 33.700 L918.400 45.700 L914 42.500 Z" fill="#8c8a00" stroke="#2a2a00" stroke-width="0.900"/><path d="M913.200 42.300 L918.400 46.200" stroke="#444" stroke-width="0.900"/><path d="M923.200 36.300 L926.200 33.400 L926.200 35 L929.300 35 L929.300 37.700 L926.200 37.700 L926.200 39.200Z" fill="#0a14b4"/></svg>
<span id="t113" class="t" style="top:28.06px;font-size:20px;color:#000;left:931px;transform:scale(0.9296,1.0);font-family:'DejaVu Sans Condensed','Liberation Sans',sans-serif;">[<u>C</u>]errar</span>
<div style="left:914px;top:59px;width:13px;height:13px;background:#fff;box-shadow:inset 0 0 0 1px #444;"><svg width="13" height="13" viewBox="0 0 13 13" style="position:absolute;left:0;top:0"><path d="M2.8 6.6 L5.2 9.2 L10.2 3.4" fill="none" stroke="#222" stroke-width="1.2"/></svg></div>
<div style="left:928px;top:58px;width:77px;height:17.5px;overflow:hidden"><span id="imp0" class="t" style="left:2.7px;top:1.92px;font-size:19.5px;color:#fff;transform:scaleX(0.8800);font-family:'DejaVu Sans Condensed','Liberation Sans',sans-serif;-webkit-text-stroke:0.45px #fff;">Imprimir</span></div>
<div style="left:908px;top:81px;width:90px;height:32px;background:#e4e4e4;border:1px solid #a8a8a8;box-sizing:border-box;"></div>
<span id="t114" class="t" style="top:88.04px;font-size:19.3px;color:#000;left:919.4px;transform:scale(0.9478,1.0);font-family:'DejaVu Sans Condensed','Liberation Sans',sans-serif;">[<u>N</u>]uevo</span>
<div style="left:908px;top:122px;width:90px;height:29.5px;background:#e4e4e4;border:1px solid #a8a8a8;box-sizing:border-box;"></div>
<span id="t115" class="t" style="top:127.40px;font-size:20px;color:#a24208;left:913px;transform:scale(0.9625,1.0);font-weight:bold;">Imprimir</span>
<div style="left:908px;top:156px;width:90px;height:29.5px;background:#e4e4e4;border:1px solid #a8a8a8;box-sizing:border-box;"></div>
<span id="t116" class="t" style="top:160.77px;font-size:21px;color:#a24208;left:924px;transform:scale(0.9500,1.0);font-weight:bold;">Ticket</span>
<div style="left:910px;top:195px;width:13px;height:13px;background:#fff;box-shadow:inset 0 0 0 1px #444;"><svg width="13" height="13" viewBox="0 0 13 13" style="position:absolute;left:0;top:0"><path d="M2.8 6.6 L5.2 9.2 L10.2 3.4" fill="none" stroke="#222" stroke-width="1.2"/></svg></div>
<span id="t117" class="t" style="top:194.57px;font-size:11px;color:#fff;left:926px;transform:scale(0.9459,1.0);">Mostrar</span>
<span id="t118" class="t" style="top:207.07px;font-size:11px;color:#fff;left:926px;transform:scale(0.9459,1.0);">Detalle Cartera</span>
<div style="left:907px;top:228px;width:92.3px;height:42px;background:#e4e4e4;border:1px solid #f0f0f0;box-sizing:border-box;box-shadow:inset 0 0 0 1px #9c9c9c;"></div>
<svg style="left:909px;top:238px" width="30" height="24" viewBox="0 0 30 24"><rect x="1" y="6" width="26" height="16" fill="#f2ee78" stroke="#c8c040" stroke-width="1"/><path d="M1 6 L10.5 14 L14 11.5 L17.5 14 L27 6" fill="none" stroke="#d8a838" stroke-width="1.1"/><path d="M1 22 L10.5 14 M27 22 L17.5 14" stroke="#d8c858" stroke-width="0.8"/><path d="M20.5 12.5 L20.5 3.5 Q20.500 1 22.700 1 Q25 1 25 3.500 L25 13.500 Q25 15 23.700 15 Q22.500 15 22.500 13.500 L22.500 5" fill="none" stroke="#3a4a6a" stroke-width="1.2"/></svg>
<span id="t119" class="t" style="top:234.92px;font-size:13.5px;color:#000;left:947px;transform:scale(0.9474,1.0);font-family:'DejaVu Sans Condensed','Liberation Sans',sans-serif;">Enviar</span>
<span id="t120" class="t" style="top:250.92px;font-size:13.5px;color:#000;left:951px;transform:scale(0.9118,1.0);font-family:'DejaVu Sans Condensed','Liberation Sans',sans-serif;">Email</span>
<div style="left:910px;top:296px;width:91px;height:28px;background:#e4e4e4;border:1px solid #a8a8a8;box-sizing:border-box;"></div>
<svg style="left:921px;top:303.3px" width="17.68" height="13.52" viewBox="0 0 17 13"><path d="M2 11.800 L10.800 1.200" stroke="#9a9a9a" stroke-width="1.600" fill="none"/><path d="M1.300 10.900 L5.600 5.600 L10.300 0.500" stroke="#800000" stroke-width="2.300" fill="none"/><path d="M0.200 2.600 L3.500 2.700 L6 4.700 L8.200 7.200 L10.600 10.600" stroke="#800000" stroke-width="1.500" fill="none"/><rect x="12.800" y="1.400" width="3.200" height="5.700" fill="#000"/><rect x="12.800" y="8.200" width="3.200" height="1.900" fill="#000"/></svg>
<span id="t121" class="t" style="top:301.21px;font-size:15.3px;color:#a0300c;left:939.3px;transform:scale(1.0208,1.0);font-weight:bold;">Anular</span>
<div style="left:910px;top:334px;width:94px;height:38px;background:#e4e4e4;border:1px solid #a8a8a8;box-sizing:border-box;"></div>
<svg style="left:917px;top:344.500px" width="9.200" height="11.700" viewBox="0 0 11 14"><path d="M3 6 L3 3.800 Q3 1.200 5.500 1.200 Q8 1.200 8 3.800 L8 6" fill="none" stroke="#101090" stroke-width="1.5"/><rect x="1" y="5.8" width="9" height="7.6" rx="1" fill="#101090"/><rect x="5" y="8" width="1.2" height="3" fill="#fff"/></svg>
<span id="t122" class="t" style="top:339.63px;font-size:10.5px;color:#a24018;left:931px;transform:scale(1.0167,1.0);">Desbloquear</span>
<span id="t123" class="t" style="top:353.63px;font-size:10.5px;color:#a24018;left:947px;transform:scale(1.0303,1.0);">Recibo</span>
<div style="left:910px;top:379px;width:96px;height:53.2px;background:linear-gradient(#e4effd,#c4dcf8 60%,#b4d0f4);border:1px solid #d0e0f4;box-sizing:border-box;border-radius:3px;"></div>
<svg style="left:916px;top:392px" width="26" height="26" viewBox="916 392 26 26"><rect x="917.300" y="393.800" width="22.400" height="22.700" fill="#d4e2f2" opacity="0.700"/><path d="M925.500 395 L932.300 395 L932.300 401.700 L939.100 401.700 L939.100 408.600 L932.300 408.600 L932.300 416 L925.500 416 L925.500 408.600 L918 408.600 L918 401.700 L925.500 401.700Z" fill="#4aa6e2"/><path d="M939.100 402.200 L939.100 408.600 L932.300 408.600 L932.300 416 L928.500 416 Q922.500 411.500 927 405.500 Q930.500 402 939.100 402.200Z" fill="#0a5cb8"/><path d="M924.800 412 Q924 404 932.500 401.800" stroke="#dbe8f6" stroke-width="1.300" fill="none"/></svg>
<span id="t124" class="t" style="top:387.85px;font-size:15px;color:#444;left:942px;">Medios</span>
<span id="t125" class="t" style="top:407.05px;font-size:15px;color:#444;left:948px;transform:scale(0.9756,1.0);">pagos</span>
<svg style="left:890px;top:278px" width="115" height="64" viewBox="890 278 115 64"><path d="M1008 284.5 L909 284.5 Q896.500 285 896.500 297.500 L896.500 323.500 Q896.500 337 910 337 L1008 337" fill="none" stroke="#000" stroke-width="4.6"/></svg>
</div></body></html>
